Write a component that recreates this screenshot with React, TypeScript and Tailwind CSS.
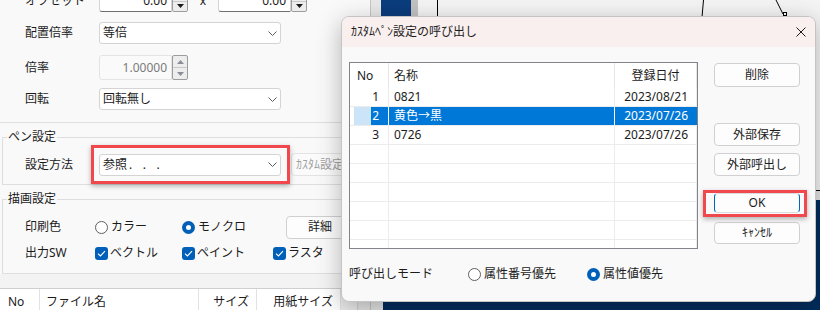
import type { ReactNode } from "react";

const penRows = [
  { no: "1", name: "0821", date: "2023/08/21" },
  { no: "2", name: "黄色→黒", date: "2023/07/26", selected: true },
  { no: "3", name: "0726", date: "2023/07/26" },
];

function Chevron() {
  return (
    <svg width="9" height="5" viewBox="0 0 9 5" className="shrink-0">
      <path d="M0.5 0.5L4.5 4.5L8.5 0.5" fill="none" stroke="#5c5c5c" strokeWidth="1" />
    </svg>
  );
}

function ComboBox({ children }: { children: ReactNode }) {
  return (
    <div className="flex h-[22px] w-[182px] shrink-0 items-center justify-between rounded-[3px] border border-[#d4d4d4] bg-white pl-[3px] pr-[3px]">
      <span>{children}</span>
      <Chevron />
    </div>
  );
}

function Tri({ up, color }: { up?: boolean; color: string }) {
  return (
    <svg width="7" height="4" viewBox="0 0 7 4">
      <path d={up ? "M0 4L3.5 0L7 4Z" : "M0 0L7 0L3.5 4Z"} fill={color} />
    </svg>
  );
}

function NumBox({ value, disabled }: { value: string; disabled?: boolean }) {
  const arrow = disabled ? "#8a8d9a" : "#1a1a1a";
  return (
    <div className="flex h-full w-[89px] shrink-0">
      <div
        className={`flex flex-1 items-center justify-end rounded-l-[3px] border pr-[4px] ${
          disabled
            ? "border-[#e4e4e4] bg-[#fafafa] text-[#7a7a7a]"
            : "border-[#d4d4d4] border-b-[#6f6f6f] bg-white"
        }`}
      >
        {value}
      </div>
      <div className="flex w-[16px] flex-col rounded-[2px] border border-[#9c9c9c] bg-[#ededed]">
        <div className="flex flex-1 items-center justify-center border-b border-[#c9c9c9]">
          <Tri up color={arrow} />
        </div>
        <div className="flex flex-1 items-center justify-center">
          <Tri color={arrow} />
        </div>
      </div>
    </div>
  );
}

function Radio({ checked }: { checked?: boolean }) {
  return checked ? (
    <span className="flex h-[13px] w-[13px] shrink-0 items-center justify-center rounded-full bg-[#005fb8]">
      <span className="h-[5px] w-[5px] rounded-full bg-white" />
    </span>
  ) : (
    <span className="h-[13px] w-[13px] shrink-0 rounded-full border border-[#5f5f5f] bg-white" />
  );
}

function Check() {
  return (
    <span className="flex h-[13px] w-[13px] shrink-0 items-center justify-center rounded-[3px] bg-[#005fb8]">
      <svg width="9" height="7" viewBox="0 0 9 7">
        <path d="M1 3.6L3.4 6L8 1.2" fill="none" stroke="white" strokeWidth="1.1" />
      </svg>
    </span>
  );
}

function Row({ label, className, children }: { label: string; className: string; children: ReactNode }) {
  return (
    <div className={`flex items-center ${className}`}>
      <span className="w-[74px] shrink-0">{label}</span>
      {children}
    </div>
  );
}

function LeftPanel() {
  return (
    <div className="flex w-[371px] shrink-0 flex-col border-r border-[#c6c6c6] bg-[#f9f9f9]">
      <div className="border-b border-[#dedede] pb-[12px] pl-[25px]">
        <Row label="オフセット" className="mt-[-10px] h-[22px]">
          <NumBox value="0.00" />
          <span className="w-[30px] text-center">x</span>
          <NumBox value="0.00" />
        </Row>
        <Row label="配置倍率" className="mt-[10px] h-[22px]">
          <ComboBox>等倍</ComboBox>
        </Row>
        <Row label="倍率" className="mt-[11px] h-[25px]">
          <NumBox value="1.00000" disabled />
        </Row>
        <Row label="回転" className="mt-[8px] h-[22px]">
          <ComboBox>回転無し</ComboBox>
        </Row>
      </div>

      <fieldset className="ml-[2px] mr-[4px] mt-[6px] border border-[#dedede]">
        <legend className="ml-[4px] px-[1px] leading-[16px]">ペン設定</legend>
        <Row label="設定方法" className="mb-[8px] mt-[8px] h-[23px] pl-[22px]">
          <ComboBox>
            参照<span className="ml-[2px] tracking-[10.5px]">...</span>
          </ComboBox>
          <div className="ml-[10px] flex h-[23px] w-[80px] items-center rounded-[4px] border border-[#e3e3e3] bg-[#fbfbfb] pl-[4px] text-[#a0a0a0]">
            ｶｽﾀﾑ設定
          </div>
        </Row>
      </fieldset>

      <fieldset className="ml-[2px] mr-[4px] mt-[6px] border border-[#dedede]">
        <legend className="ml-[4px] px-[1px] leading-[16px]">描画設定</legend>
        <div className="mt-[8px] flex h-[24px] items-center pl-[22px]">
          <span className="w-[70px] shrink-0">印刷色</span>
          <span className="flex w-[87px] items-center gap-[3px]">
            <Radio />
            カラー
          </span>
          <span className="flex w-[104px] items-center gap-[3px]">
            <Radio checked />
            モノクロ
          </span>
          <div className="flex h-[23px] w-[68px] items-center justify-center rounded-[4px] border border-[#d0d0d0] bg-[#fdfdfd]">
            詳細
          </div>
        </div>
        <div className="mb-[10px] mt-[4px] flex h-[20px] items-center pl-[22px]">
          <span className="w-[70px] shrink-0">出力SW</span>
          <span className="flex w-[87px] items-center gap-[2px]">
            <Check />
            ベクトル
          </span>
          <span className="flex w-[91px] items-center gap-[2px]">
            <Check />
            ペイント
          </span>
          <span className="flex items-center gap-[2px]">
            <Check />
            ラスタ
          </span>
        </div>
      </fieldset>

      <div className="flex-1 bg-[#f3f3f3] pt-[14px]">
        <div className="flex h-[26px] border-t border-[#cfcfcf] bg-white">
          <div className="flex w-[40px] items-center border-r border-[#e2e2e2] pl-[8px]">No</div>
          <div className="flex w-[159px] items-center border-r border-[#e2e2e2] pl-[6px]">ファイル名</div>
          <div className="flex w-[58px] items-center justify-end border-r border-[#e2e2e2] pr-[7px]">サイズ</div>
          <div className="flex w-[84px] items-center justify-end border-r border-[#e2e2e2] pr-[7px]">用紙サイズ</div>
          <div className="w-[17px] border-r border-[#d0d0d0] bg-[#ececec]" />
          <div className="flex-1 bg-[#e6e6e6]" />
        </div>
      </div>
    </div>
  );
}

function Canvas() {
  return (
    <div className="flex flex-1 flex-col">
      <div className="flex h-[190px]">
        <div className="w-[10px] bg-[#e8e8e8]" />
        <div className="w-[30px] bg-[#0b3c7c]" />
        <div className="w-[7px] bg-[#c2c2c2]" />
        <div className="flex-1 bg-[#f4f4f4]">
          <svg width="402" height="190" viewBox="0 0 402 190">
            <path d="M19.5 0V190" stroke="#000" strokeWidth="1" />
            <path d="M285.5 0L282 40" stroke="#000" strokeWidth="1" />
            <path d="M358 0L365 14" stroke="#000" strokeWidth="1" />
            <rect x="365.5" y="12.5" width="3" height="3" fill="#fff" stroke="#000" strokeWidth="1" />
          </svg>
        </div>
      </div>
      <div className="h-[10px] border-t border-black bg-[#e4e4e4]" />
      <div className="flex flex-1">
        <div className="w-[12px] bg-[#e6e6e6]" />
        <div className="flex-1 bg-[#022d5e]" />
      </div>
    </div>
  );
}

function PenTable() {
  return (
    <div className="h-[187px] w-[349px] overflow-hidden border border-[#83838c] bg-white">
      <div className="flex h-[25px]">
        <div className="flex w-[39px] items-center border-r border-[#e6e6e6] pl-[7px]">No</div>
        <div className="flex w-[226px] items-center border-r border-[#e6e6e6] pl-[5px]">名称</div>
        <div className="flex w-[82px] items-center justify-center border-r border-[#e6e6e6]">登録日付</div>
      </div>
      {penRows.map((r) =>
        r.selected ? (
          <div key={r.no} className="flex h-[19px] border-b border-[#ececec] text-white">
            <div className="flex w-[39px] border-r border-white">
              <div className="w-[4px] bg-white" />
              <div className="w-[17px] bg-[#cce4f7]" />
              <div className="flex flex-1 items-center justify-end bg-[#0078d7] pr-[9px]">{r.no}</div>
            </div>
            <div className="flex w-[226px] items-center border-r border-white bg-[#0078d7] pl-[5px]">{r.name}</div>
            <div className="flex w-[82px] items-center justify-end bg-[#0078d7] pr-[9px]">{r.date}</div>
          </div>
        ) : (
          <div key={r.no} className="flex h-[19px] border-b border-[#ececec]">
            <div className="flex w-[39px] items-center justify-end border-r border-[#ececec] pr-[9px]">{r.no}</div>
            <div className="flex w-[226px] items-center border-r border-[#ececec] pl-[5px]">{r.name}</div>
            <div className="flex w-[82px] items-center justify-end border-r border-[#ececec] pr-[8px]">{r.date}</div>
          </div>
        ),
      )}
      {Array.from({ length: 6 }).map((_, i) => (
        <div key={i} className="flex h-[19px] border-b border-[#ececec]">
          <div className="w-[39px] border-r border-[#ececec]" />
          <div className="w-[226px] border-r border-[#ececec]" />
          <div className="w-[82px] border-r border-[#ececec]" />
        </div>
      ))}
    </div>
  );
}

function DlgButton({ children, className }: { children: ReactNode; className: string }) {
  return (
    <button
      type="button"
      className={`flex w-[86px] items-center justify-center rounded-[4px] border bg-[#fdfdfd] ${className}`}
    >
      {children}
    </button>
  );
}

function Dialog() {
  return (
    <div className="absolute left-[341px] top-[16px] flex h-[286px] w-[475px] flex-col overflow-hidden rounded-[8px] border border-[#c4c4c4] bg-[#f9f9f9] shadow-[0_6px_24px_rgba(0,0,0,0.28)]">
      <div className="flex h-[30px] shrink-0 items-center justify-between bg-[#f9efee] pl-[9px] pr-[9px]">
        <span>ｶｽﾀﾑﾍﾟﾝ設定の呼び出し</span>
        <svg width="10" height="10" viewBox="0 0 10 10">
          <path d="M0.5 0.5L9.5 9.5M9.5 0.5L0.5 9.5" stroke="#1a1a1a" strokeWidth="1" />
        </svg>
      </div>
      <div className="flex pl-[7px] pt-[15px]">
        <div className="flex flex-col">
          <PenTable />
          <div className="mt-[15px] flex h-[20px] items-center">
            <span className="w-[119px]">呼び出しモード</span>
            <span className="flex w-[119px] items-center gap-[3px]">
              <Radio />
              属性番号優先
            </span>
            <span className="flex items-center gap-[3px]">
              <Radio checked />
              属性値優先
            </span>
          </div>
        </div>
        <div className="ml-[16px] flex flex-col">
          <DlgButton className="mt-[1px] h-[24px] border-[#d0d0d0]">削除</DlgButton>
          <DlgButton className="mt-[36px] h-[23px] border-[#d0d0d0]">外部保存</DlgButton>
          <DlgButton className="mt-[7px] h-[23px] border-[#d0d0d0]">外部呼出し</DlgButton>
          <DlgButton className="mt-[17px] h-[20px] border-[#dcdcdc] border-x-[#0067c0]">OK</DlgButton>
          <DlgButton className="mt-[9px] h-[22px] border-[#d0d0d0]">ｷｬﾝｾﾙ</DlgButton>
        </div>
      </div>
    </div>
  );
}

export default function App() {
  return (
    <div className="relative flex h-[310px] w-[820px] overflow-hidden bg-[#f3f3f3] font-['Noto_Sans','Noto_Sans_CJK_JP',sans-serif] text-[12px] leading-[16px] text-[#1b1b1b]">
      <LeftPanel />
      <Canvas />
      <Dialog />
      <div className="pointer-events-none absolute left-[91px] top-[145px] h-[39px] w-[199px] border-[3px] border-[#f0484c] shadow-[0_2px_5px_rgba(0,0,0,0.3)]" />
      <div className="pointer-events-none absolute left-[703px] top-[190px] h-[27px] w-[104px] border-[3px] border-[#f0484c] shadow-[0_2px_5px_rgba(0,0,0,0.3)]" />
    </div>
  );
}
